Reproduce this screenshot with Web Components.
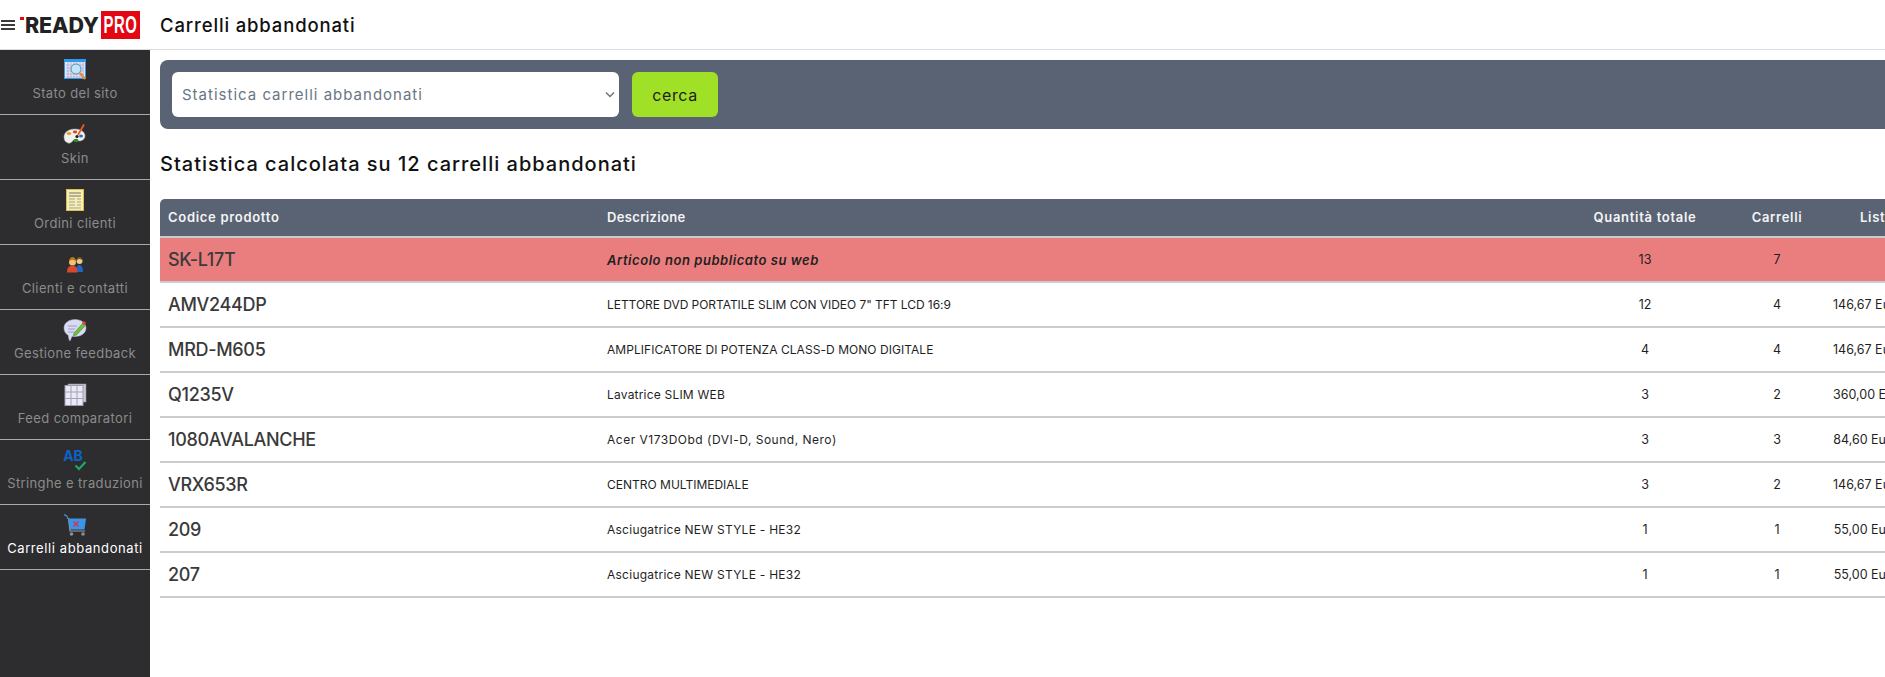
<!DOCTYPE html>
<html lang="it">
<head>
<meta charset="utf-8">
<title>Carrelli abbandonati</title>
<style>
  html, body { margin: 0; height: 100%; overflow: hidden; background: #fff; }
  body { font-family: Inter, "Noto Sans", sans-serif; color: #212529; }
  app-shell svg { display: block; }
</style>
</head>
<body>

<app-shell>
  <ready-logo slot="logo"></ready-logo>
  <span slot="title">Carrelli abbandonati</span>

  <side-nav slot="nav">
    <nav-item label="Stato del sito">
      <svg width="24" height="24" viewBox="0 0 24 24">
        <rect x="1.500" y="1.500" width="21" height="19" fill="#e4e4f6" stroke="#2f9be8"/>
        <rect x="1" y="1" width="22" height="3" fill="#2f9be8"/>
        <path d="M3 7h18M3 10h18M3 13h18M3 16h18M3 19h18M5 4v16M8 4v16M11 4v16M14 4v16M17 4v16M20 4v16" stroke="#a9a9cf" stroke-width=".7"/>
        <circle cx="13" cy="11" r="5" fill="#bfe6f6" stroke="#5b93b5"/>
        <path d="M17 15l5 6" stroke="#e8893a" stroke-width="2.400"/>
      </svg>
    </nav-item>
    <nav-item label="Skin">
      <svg width="24" height="24" viewBox="0 0 24 24">
        <path d="M1 14c0-5 5-8 11-8s10 3 10 7c0 3-3 5-6 5-2 0-3-2-5-1-2 1-3 4-6 3-3-1-4-3-4-6z" fill="#f1f1ee" stroke="#a9a9a6" stroke-width=".5"/>
        <ellipse cx="6" cy="10.500" rx="2.200" ry="1.600" fill="#d9a514"/>
        <ellipse cx="12" cy="9" rx="2.200" ry="1.400" fill="#d8432c"/>
        <ellipse cx="18" cy="13" rx="2" ry="1.600" fill="#2d6fc4"/>
        <ellipse cx="13" cy="17.500" rx="2.400" ry="1.800" fill="#2c8a2c"/>
        <circle cx="14" cy="13.500" r="1.600" fill="#1c1c1c"/>
        <path d="M15 12L21 1.500" stroke="#ef5a24" stroke-width="1.800"/>
      </svg>
    </nav-item>
    <nav-item label="Ordini clienti">
      <svg width="24" height="24" viewBox="0 0 24 24">
        <rect x="3.500" y="1.500" width="17" height="21" fill="#f6eeb4" stroke="#d5bf4e"/>
        <path d="M6 5h12M6 8h12" stroke="#77756a" stroke-width="1.200"/>
        <path d="M6 11h6M6 14h6M6 17h6M14 11h4M14 14h4M14 17h4M6 20h12" stroke="#a5a38e"/>
      </svg>
    </nav-item>
    <nav-item label="Clienti e contatti">
      <svg width="24" height="24" viewBox="0 0 24 24">
        <circle cx="16.500" cy="8" r="3" fill="#f0c98a"/>
        <path d="M13.500 8c0-3 1.500-4 3-4s3 1 3 4c-1-1.500-2-2-3-2s-2 .5-3 2z" fill="#7a5a16"/>
        <path d="M13 19c0-5 1.500-7 3.500-7s3.500 2 3.500 7z" fill="#1f66c4"/>
        <circle cx="9.500" cy="9" r="3.500" fill="#f2c27c"/>
        <path d="M6 9c0-3.500 2-5 3.500-5S13 5.500 13 9c-1-1.500-2-2.200-3.500-2.200S7 7.500 6 9z" fill="#b57a14"/>
        <path d="M4 19.500c0-5 2-7 5.500-7s5 2 5 7z" fill="#d8482a"/>
      </svg>
    </nav-item>
    <nav-item label="Gestione feedback">
      <svg width="24" height="24" viewBox="0 0 24 24">
        <path d="M12 1.500c6 0 11 3.500 11 8.500s-5 8.500-11 8.500c-1 0-2-.1-3-.3L7 23c-1-1-1.500-3-1.500-5.500C3 16 1 13.500 1 10c0-5 5-8.500 11-8.500z" fill="#d9dbf5" stroke="#b8bbd9" stroke-width=".5"/>
        <path d="M5 8h9M5 11h7M5 14h6" stroke="#9a9dc8"/>
        <path d="M11 15l9-10 2.500 2.500-9 9.500-3 .8z" fill="#6ac23c" stroke="#3b7d22" stroke-width=".5"/>
        <circle cx="21" cy="5" r="1.800" fill="#e63c3c"/>
      </svg>
    </nav-item>
    <nav-item label="Feed comparatori">
      <svg width="24" height="24" viewBox="0 0 24 24">
        <rect x="5" y="1" width="18" height="18" fill="#c9c9cf" stroke="#8e8e96" stroke-width=".6"/>
        <rect x="2" y="2.500" width="18" height="20" fill="#e9e9fa" stroke="#9d9da8"/>
        <path d="M8 2.500v20M14 2.500v20M2 9h18M2 15.500h18" stroke="#a3a3b1"/>
      </svg>
    </nav-item>
    <nav-item label="Stringhe e traduzioni">
      <svg width="24" height="24" viewBox="0 0 24 24">
        <text x="10" y="13" text-anchor="middle" font-family="Inter, sans-serif" font-size="14" font-weight="700" fill="#0d62c9">AB</text>
        <path d="M12.500 17.500l3.500 3.500 6.500-7" fill="none" stroke="#1fa865" stroke-width="2.200"/>
      </svg>
    </nav-item>
    <nav-item label="Carrelli abbandonati" active>
      <svg width="24" height="24" viewBox="0 0 24 24">
        <path d="M1 1.500l3.500 2" stroke="#3aa0e8" stroke-width="1.400"/>
        <path d="M4 4.500l1.500 1L7 18h15" fill="none" stroke="#9d9da3" stroke-width="1.200"/>
        <path d="M5 5.500h18l-1.500 11H7z" fill="#3b95e6"/>
        <path d="M10.500 8.500l5 5M15.500 8.500l-5 5" stroke="#d8344a" stroke-width="1.500"/>
        <circle cx="8.500" cy="21" r="1.800" fill="#8d8d93"/>
        <circle cx="20" cy="21" r="1.800" fill="#8d8d93"/>
      </svg>
    </nav-item>
  </side-nav>

  <search-panel></search-panel>
  <section-title>Statistica calcolata su 12 carrelli abbandonati</section-title>
  <stat-table>
    <stat-row head code="Codice prodotto" desc="Descrizione" qty="Quantità totale" carts="Carrelli" price="Listino"></stat-row>
    <stat-row warn code="SK-L17T" desc="Articolo non pubblicato su web" qty="13" carts="7" price=""></stat-row>
    <stat-row code="AMV244DP" desc="LETTORE DVD PORTATILE SLIM CON VIDEO 7&quot; TFT LCD 16:9" qty="12" carts="4" price="146,67 Euro" style="--desc-ls:-.05px"></stat-row>
    <stat-row code="MRD-M605" desc="AMPLIFICATORE DI POTENZA CLASS-D MONO DIGITALE" qty="4" carts="4" price="146,67 Euro" style="--desc-ls:.05px"></stat-row>
    <stat-row code="Q1235V" desc="Lavatrice SLIM WEB" qty="3" carts="2" price="360,00 Euro" style="--desc-ls:.2px"></stat-row>
    <stat-row code="1080AVALANCHE" desc="Acer V173DObd (DVI-D, Sound, Nero)" qty="3" carts="3" price="84,60 Euro" style="--desc-ls:.5px"></stat-row>
    <stat-row code="VRX653R" desc="CENTRO MULTIMEDIALE" qty="3" carts="2" price="146,67 Euro"></stat-row>
    <stat-row code="209" desc="Asciugatrice NEW STYLE - HE32" qty="1" carts="1" price="55,00 Euro" style="--desc-ls:.25px"></stat-row>
    <stat-row code="207" desc="Asciugatrice NEW STYLE - HE32" qty="1" carts="1" price="55,00 Euro" style="--desc-ls:.25px"></stat-row>
  </stat-table>
</app-shell>

<script>
class AppShell extends HTMLElement {
  constructor() {
    super();
    this.attachShadow({mode: "open"}).innerHTML = `
      <style>
        :host { display: flex; flex-direction: column; width: 1885px; height: 677px; overflow: hidden; }
        .top { display: flex; align-items: center; height: 49px; flex: none; background: #fff; border-bottom: 1px solid #dcdcdc; }
        .logo { width: 150px; flex: none; }
        .title { margin-left: 10px; font-size: 18.500px; font-weight: 500; color: #111; letter-spacing: .85px; white-space: nowrap; }
        .below { display: flex; flex: 1; min-height: 0; }
        .nav { width: 150px; flex: none; background: #2d2d2f; }
        .main { flex: none; width: 1756px; padding: 10px 0 0 10px; box-sizing: border-box; }
      </style>
      <div class="top">
        <div class="logo"><slot name="logo"></slot></div>
        <div class="title"><slot name="title"></slot></div>
      </div>
      <div class="below">
        <div class="nav"><slot name="nav"></slot></div>
        <div class="main"><slot></slot></div>
      </div>
    `;
  }
}
customElements.define("app-shell", AppShell);

class ReadyLogo extends HTMLElement {
  constructor() {
    super();
    this.attachShadow({mode: "open"}).innerHTML = `
      <style>
        :host { display: flex; align-items: center; height: 28px; padding-left: 1px; }
        .burger { width: 14px; height: 6px; margin-right: 5px; flex: none; border-top: 2px solid #3a3a3a; border-bottom: 2px solid #3a3a3a; position: relative; }
        .burger::after { content: ""; position: absolute; left: 0; right: 0; top: 2px; height: 2px; background: #3a3a3a; }
        .mark { position: relative; width: 81px; flex: none; font-size: 21.500px; font-weight: 800; letter-spacing: -.15px; color: #222; line-height: 28px; padding-left: 5px; box-sizing: border-box; white-space: nowrap; }
        .mark::before { content: ""; position: absolute; left: 0; top: 6px; width: 4px; height: 3px; background: #e30613; }
        .pro { width: 39px; height: 28px; flex: none; background: #e30613; color: #fff; font-family: "Liberation Sans", sans-serif; font-weight: 700; font-size: 24px; line-height: 28px; display: flex; justify-content: center; overflow: hidden; }
        .pro span { display: block; transform: scaleX(.62); letter-spacing: 1px; }
      </style>
      <div class="burger"></div>
      <div class="mark">READY</div>
      <div class="pro"><span>PRO</span></div>
    `;
  }
}
customElements.define("ready-logo", ReadyLogo);

class SideNav extends HTMLElement {
  constructor() {
    super();
    this.attachShadow({mode: "open"}).innerHTML = `
      <style>:host { display: block; }</style>
      <slot></slot>
    `;
  }
}
customElements.define("side-nav", SideNav);

class NavItem extends HTMLElement {
  constructor() {
    super();
    const active = this.hasAttribute("active");
    this.attachShadow({mode: "open"}).innerHTML = `
      <style>
        :host { display: flex; flex-direction: column; align-items: center; box-sizing: border-box; height: 65px; padding-top: 8px; border-bottom: 1px solid #a9a9a9; }
        .icon { width: 24px; height: 24px; }
        .label { margin-top: 1px; font-size: 13px; line-height: 20px; white-space: nowrap; letter-spacing: ${active ? ".6px" : ".38px"}; color: ${active ? "#fff" : "#8b8b8b"}; }
      </style>
      <div class="icon"><slot></slot></div>
      <div class="label">${this.getAttribute("label")}</div>
    `;
  }
}
customElements.define("nav-item", NavItem);

class SearchPanel extends HTMLElement {
  constructor() {
    super();
    this.attachShadow({mode: "open"}).innerHTML = `
      <style>
        :host { display: flex; gap: 13px; padding: 12px; background: #596373; border-radius: 8px 0 0 8px; }
        .sel { position: relative; width: 447px; height: 45px; }
        select { appearance: none; width: 100%; height: 100%; border: 0; border-radius: 6px; background: #fff; padding: 0 10px; font: inherit; font-size: 15px; color: #6a7683; letter-spacing: 1px; }
        .sel svg { position: absolute; right: 4px; top: 19px; pointer-events: none; }
        button { width: 86px; height: 45px; border: 0; border-radius: 6px; background: #a0e026; font: inherit; font-size: 16px; color: #1d1d1d; letter-spacing: .6px; }
      </style>
      <div class="sel">
        <select><option>Statistica carrelli abbandonati</option></select>
        <svg width="10" height="8" viewBox="0 0 10 8"><path d="M1 1.500l4 4 4-4" fill="none" stroke="#6a7683" stroke-width="1.500"/></svg>
      </div>
      <button>cerca</button>
    `;
  }
}
customElements.define("search-panel", SearchPanel);

class SectionTitle extends HTMLElement {
  constructor() {
    super();
    this.attachShadow({mode: "open"}).innerHTML = `
      <style>:host { display: block; margin: 20px 0 20px; font-size: 20px; font-weight: 500; line-height: 30px; color: #111; letter-spacing: 1px; white-space: nowrap; }</style>
      <slot></slot>
    `;
  }
}
customElements.define("section-title", SectionTitle);

class StatTable extends HTMLElement {
  constructor() {
    super();
    this.attachShadow({mode: "open"}).innerHTML = `
      <style>:host { display: block; border-radius: 5px 5px 0 0; overflow: hidden; }</style>
      <slot></slot>
    `;
  }
}
customElements.define("stat-table", StatTable);

class StatRow extends HTMLElement {
  constructor() {
    super();
    const head = this.hasAttribute("head");
    const warn = this.hasAttribute("warn");
    const headFont = "font-size: 13px; font-weight: 600; letter-spacing: .7px;";
    this.attachShadow({mode: "open"}).innerHTML = `
      <style>
        :host { display: grid; grid-template-columns: 439px 962px 168px 96px 81px; align-items: center; box-sizing: border-box; height: ${head ? 39 : 45}px; border-bottom: 2px solid #ccc; background: ${head ? "#596373" : warn ? "#ea7e7e" : "#fff"}; color: ${head ? "#f4f4f4" : "#1f1f1f"}; font-size: 12.500px; }
        div { padding: 0 8px ${head ? "2px" : "0"}; white-space: nowrap; }
        .code { ${head ? headFont : "font-size: 18px; font-weight: 500; letter-spacing: -.3px; color: #3a3a3a;"} }
        .desc { ${head ? headFont + " letter-spacing: .35px;" : warn ? "font-size: 13px; font-weight: 600; font-style: italic; letter-spacing: .55px;" : "font-size: 12px; letter-spacing: var(--desc-ls, 0);"} }
        .qty, .carts { text-align: center; ${head ? headFont : ""} }
        .price { text-align: right; ${head ? headFont + " text-align: left; padding-left: 35px;" : ""} }
      </style>
      <div class="code">${this.getAttribute("code")}</div>
      <div class="desc">${this.getAttribute("desc").replace(/"/g, "&quot;")}</div>
      <div class="qty">${this.getAttribute("qty")}</div>
      <div class="carts">${this.getAttribute("carts")}</div>
      <div class="price">${this.getAttribute("price")}</div>
    `;
  }
}
customElements.define("stat-row", StatRow);
</script>
</body>
</html>
